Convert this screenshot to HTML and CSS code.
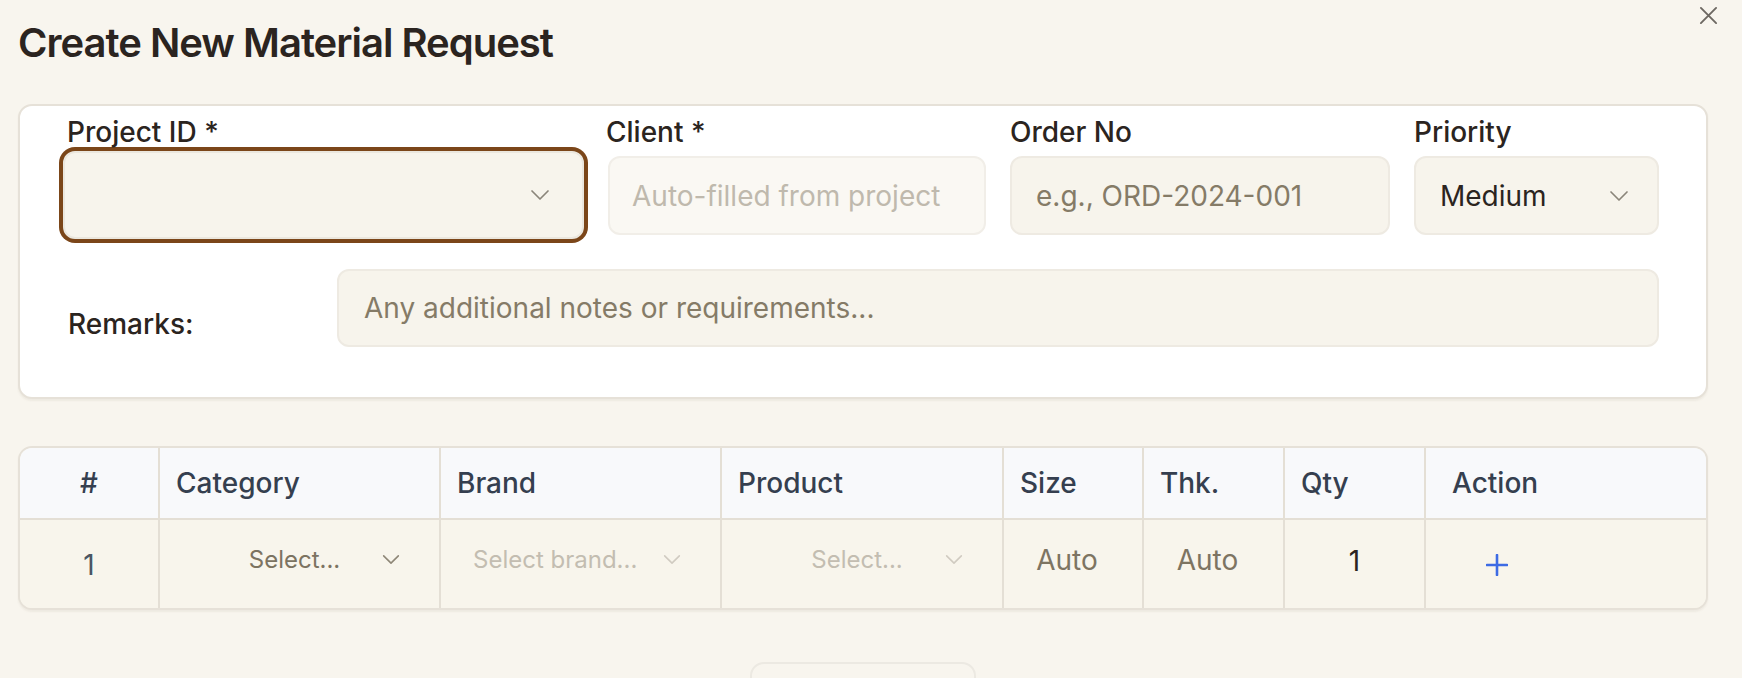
FILE: index.html
```html
<!DOCTYPE html>
<html lang="en">
<head>
<meta charset="utf-8">
<title>Create New Material Request</title>
<link rel="stylesheet" href="styles.css">
</head>
<body>
<div class="modal">
  <button class="close" aria-label="Close">
    <svg viewBox="0 0 20 20" width="19" height="19" fill="none" stroke="currentColor" stroke-width="2" stroke-linecap="round"><path d="M2 2 18 18M18 2 2 18"/></svg>
  </button>
  <h1 class="title">Create New Material Request</h1>

  <section class="card form-card">
    <div class="top-grid">
      <div class="field">
        <label class="label label-project">Project ID *</label>
        <div class="input select focused">
          <span class="value"></span>
          <svg class="chev" viewBox="0 0 20 12" width="20" height="12" fill="none" stroke="currentColor" stroke-width="1.7" stroke-linecap="round" stroke-linejoin="round"><path d="M2 2 10 10 18 2"/></svg>
        </div>
      </div>
      <div class="field">
        <label class="label label-client">Client *</label>
        <div class="input disabled"><span class="ph-light">Auto-filled from project</span></div>
      </div>
      <div class="field">
        <label class="label">Order No</label>
        <div class="input order"><span class="ph">e.g., ORD-2024-001</span></div>
      </div>
      <div class="field">
        <label class="label">Priority</label>
        <div class="input select priority">
          <span class="value">Medium</span>
          <svg class="chev" viewBox="0 0 20 12" width="20" height="12" fill="none" stroke="currentColor" stroke-width="1.7" stroke-linecap="round" stroke-linejoin="round"><path d="M2 2 10 10 18 2"/></svg>
        </div>
      </div>
    </div>
    <div class="remarks-row">
      <label class="label remarks-label">Remarks:</label>
      <div class="input remarks"><span class="ph">Any additional notes or requirements...</span></div>
    </div>
  </section>

  <section class="card table-card">
    <div class="trow thead">
      <div class="cell center">#</div>
      <div class="cell">Category</div>
      <div class="cell">Brand</div>
      <div class="cell">Product</div>
      <div class="cell">Size</div>
      <div class="cell">Thk.</div>
      <div class="cell">Qty</div>
      <div class="cell action-head">Action</div>
    </div>
    <div class="trow tbody">
      <div class="cell center num">1</div>
      <div class="cell sel-cell">
        <div class="sel">
          <span class="sel-text">Select...</span>
          <svg class="chev" viewBox="0 0 20 12" width="18" height="11" fill="none" stroke="currentColor" stroke-width="1.7" stroke-linecap="round" stroke-linejoin="round"><path d="M2 2 10 10 18 2"/></svg>
        </div>
      </div>
      <div class="cell sel-cell">
        <div class="sel disabled-sel">
          <span class="sel-text left">Select brand...</span>
          <svg class="chev" viewBox="0 0 20 12" width="18" height="11" fill="none" stroke="currentColor" stroke-width="1.7" stroke-linecap="round" stroke-linejoin="round"><path d="M2 2 10 10 18 2"/></svg>
        </div>
      </div>
      <div class="cell sel-cell">
        <div class="sel disabled-sel">
          <span class="sel-text">Select...</span>
          <svg class="chev" viewBox="0 0 20 12" width="18" height="11" fill="none" stroke="currentColor" stroke-width="1.7" stroke-linecap="round" stroke-linejoin="round"><path d="M2 2 10 10 18 2"/></svg>
        </div>
      </div>
      <div class="cell center auto">Auto</div>
      <div class="cell center auto">Auto</div>
      <div class="cell center qty">1</div>
      <div class="cell action">
        <button class="add" aria-label="Add row">
          <svg viewBox="0 0 22 22" width="22" height="22" fill="none" stroke="currentColor" stroke-width="2.6" stroke-linecap="round"><path d="M11 1v20M1 11h20"/></svg>
        </button>
      </div>
    </div>
  </section>

  <div class="footer">
    <button class="ghost-btn"></button>
  </div>
</div>
</body>
</html>
```

FILE: styles.css
```css
* {
  box-sizing: border-box;
  margin: 0;
  padding: 0;
}

html, body {
  overflow: hidden;
  height: 100%;
}

body {
  background: #f8f5ee;
  font-family: Inter, "Noto Sans", "Liberation Sans", sans-serif;
  color: #2b2420;
}

.modal {
  position: relative;
  padding: 18px 34px 0 18px;
}

.close {
  position: absolute;
  top: 6px;
  right: 24px;
  width: 19px;
  height: 19px;
  background: none;
  border: 0;
  color: #6d6862;
  display: flex;
}

.title {
  font-size: 40px;
  line-height: 50px;
  font-weight: 600;
  letter-spacing: -0.025em;
  color: #2b2420;
}

.card {
  background: #ffffff;
  border: 2px solid #e6e1d8;
  border-radius: 14px;
  box-shadow: 0 2px 2px rgba(120, 100, 70, 0.07);
}

.form-card {
  margin-top: 36px;
  padding: 6px 47px 50px 43px;
}

.top-grid {
  display: grid;
  grid-template-columns: 521fr 378fr 380fr 245fr;
  column-gap: 24px;
}

.label {
  display: block;
  font-size: 28px;
  line-height: 40px;
  font-weight: 500;
  color: #2b2420;
  margin-bottom: 4px;
}

.label-project {
  padding-left: 4px;
}

.label-client {
  margin-left: -2px;
}

.input {
  height: 79px;
  border: 2px solid #eeeae2;
  border-radius: 12px;
  background: #f7f4ec;
  display: flex;
  align-items: center;
  padding: 0 22px;
  font-size: 28px;
  color: #2b2420;
  white-space: nowrap;
  overflow: hidden;
}

.input.disabled {
  background: #faf8f3;
  border-color: #f1eee8;
}

.input.order {
  padding-left: 24px;
}

.ph {
  color: #857b67;
}

.ph-light {
  color: #bfb9ad;
}

.select {
  justify-content: space-between;
}

.select .chev {
  color: #8b857a;
  flex: none;
}

.focused {
  height: 88px;
  margin-top: -5px;
  border-color: #ebe7de;
  box-shadow: 0 0 0 4px #7b4619;
  padding-right: 32px;
}

.priority {
  padding-left: 24px;
  padding-right: 28px;
}

.remarks-row {
  display: grid;
  grid-template-columns: 250fr 1322fr;
  column-gap: 24px;
  margin-top: 30px;
}

.remarks-label {
  align-self: end;
  margin-bottom: 3px;
  padding-left: 5px;
}

.input.remarks {
  height: 78px;
  padding-left: 25px;
}

.table-card {
  margin-top: 47px;
  overflow: hidden;
  background: #f8f5ec;
}

.trow {
  display: grid;
  grid-template-columns: 140px 281px 281px 282px 140px 141px 141px 1fr;
}

.cell {
  border-right: 2px solid #e4dfd5;
  display: flex;
  align-items: center;
  padding-left: 16px;
  font-size: 28px;
}

.cell:last-child {
  border-right: 0;
}

.thead {
  height: 72px;
  background: #f8f9fb;
  border-bottom: 2px solid #e4dfd5;
}

.thead .cell {
  font-weight: 500;
  color: #353f4f;
}

.thead .action-head {
  padding-left: 26px;
}

.cell.center {
  justify-content: center;
  padding-left: 0;
}

.tbody {
  height: 88px;
  background: #f8f5ec;
}

.num {
  color: #4b5563;
  font-size: 28px;
  padding-top: 2px;
}

.sel-cell {
  padding: 0;
}

.sel {
  width: 100%;
  display: flex;
  align-items: center;
  padding: 0 38px 10px 0;
  font-size: 24px;
  color: #7c7361;
}

.sel .chev {
  flex: none;
  width: 20px;
  color: #8e8777;
}

.sel-text {
  flex: 1;
  text-align: center;
  padding-left: 48px;
  white-space: nowrap;
  overflow: hidden;
}

.sel-text.left {
  text-align: left;
  padding-left: 32px;
}

.disabled-sel {
  color: #c3bdb1;
}

.disabled-sel .chev {
  color: #d0cbc1;
}

.auto {
  font-size: 28px;
  color: #7d7462;
  padding-right: 12px;
  padding-bottom: 8px;
}

.qty {
  font-size: 28px;
  color: #2b2420;
  padding-bottom: 6px;
}

.action {
  padding-left: 60px;
}

.add {
  background: none;
  border: 0;
  color: #3d6be4;
  display: flex;
  margin-top: 2px;
}

.footer {
  display: flex;
  justify-content: center;
  margin-top: 52px;
}

.ghost-btn {
  width: 226px;
  height: 64px;
  background: #f8f5ee;
  border: 2px solid #ece9e2;
  border-radius: 14px;
}
```
